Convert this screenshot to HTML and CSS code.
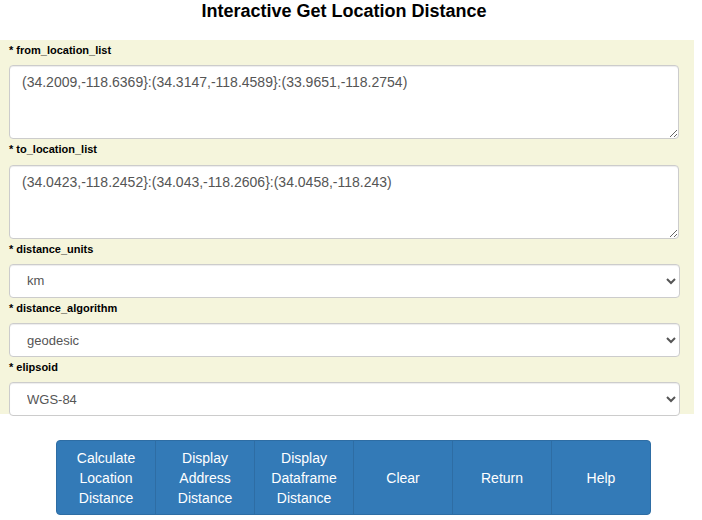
FILE: index.html
```html
<!DOCTYPE html>
<html>
<head>
<meta charset="utf-8">
<link rel="stylesheet" href="styles.css">
</head>
<body>
<h3 class="title">Interactive Get Location Distance</h3>
<form class="panel">
  <label class="lbl">* from_location_list</label>
  <textarea class="ctl area">(34.2009,-118.6369}:(34.3147,-118.4589}:(33.9651,-118.2754)</textarea>
  <label class="lbl">* to_location_list</label>
  <textarea class="ctl area">(34.0423,-118.2452}:(34.043,-118.2606}:(34.0458,-118.243)</textarea>
  <label class="lbl">* distance_units</label>
  <select class="ctl sel"><option>km</option></select>
  <label class="lbl">* distance_algorithm</label>
  <select class="ctl sel"><option>geodesic</option></select>
  <label class="lbl">* elipsoid</label>
  <select class="ctl sel"><option>WGS-84</option></select>
</form>
<div class="bar">
  <div class="group">
    <button class="btn">Calculate<br>Location<br>Distance</button>
    <button class="btn">Display<br>Address<br>Distance</button>
    <button class="btn">Display<br>Dataframe<br>Distance</button>
    <button class="btn">Clear</button>
    <button class="btn">Return</button>
    <button class="btn">Help</button>
  </div>
</div>
</body>
</html>
```
FILE: styles.css
```css
* { box-sizing: border-box; }
body {
  margin: 0;
  font-family: "Liberation Sans", Arial, sans-serif;
  background: #fff;
  width: 702px;
}
.title {
  margin: 0;
  height: 40px;
  padding-top: 1px;
  text-align: center;
  font-size: 18px;
  line-height: 20px;
  font-weight: bold;
  color: #000;
  padding-right: 14px;
}
.panel {
  width: 694px;
  height: 374px;
  background: #f5f5dc;
  padding: 0 15px 0 9px;
  display: flex;
  flex-direction: column;
}
.lbl {
  display: block;
  font-size: 11px;
  font-weight: bold;
  line-height: 15px;
  padding-top: 3px;
  height: 25.3px;
  color: #000;
  flex: none;
}
.ctl {
  display: block;
  width: 100%;
  border: 1px solid #ccc;
  border-radius: 4px;
  background: #fff;
  color: #555;
  font-family: "Liberation Sans", Arial, sans-serif;
  font-size: 14px;
  line-height: 20px;
  box-shadow: inset 0 1px 1px rgba(0,0,0,.075);
  flex: none;
}
.area {
  height: 74px;
  padding: 6px 12px;
  resize: vertical;
  width: 670px;
}
.sel {
  height: 34px;
  padding: 6px 8px 6px 13px;
  width: 671px;
  font-size: 13px;
}
.bar {
  padding-top: 26px;
  display: flex;
  justify-content: center;
  padding-left: 5px;
}
.group {
  display: flex;
}
.btn {
  width: 100px;
  height: 75px;
  margin: 0 0 0 -1px;
  padding: 6px 12px;
  background: #337ab7;
  border: 1px solid #2e6da4;
  color: #fff;
  font-family: "Liberation Sans", Arial, sans-serif;
  font-size: 14px;
  line-height: 20px;
  text-align: center;
  border-radius: 0;
}
.btn:first-child {
  margin-left: 0;
  border-radius: 4px 0 0 4px;
}
.btn:last-child {
  border-radius: 0 4px 4px 0;
}
```
